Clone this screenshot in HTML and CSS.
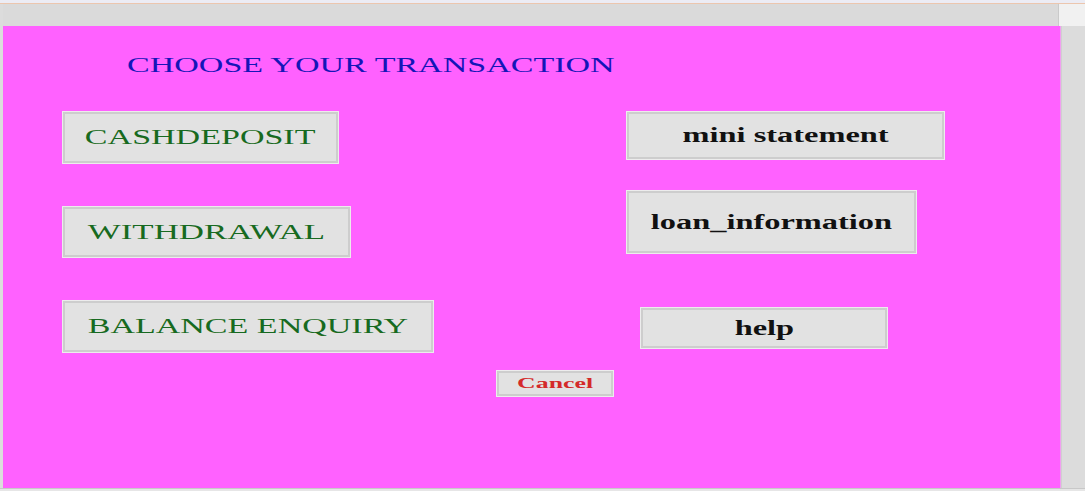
FILE: index.html
```html
<!DOCTYPE html>
<html>
<head>
<meta charset="utf-8">
<title>Transaction</title>
<link rel="stylesheet" href="styles.css">
</head>
<body>
<div class="topline"></div>
<div class="titlebar">
  <div class="titlebar-main"></div>
  <div class="titlebar-side"></div>
</div>
<div class="main">
  <div class="panel">
    <div class="heading"><span class="wide">CHOOSE YOUR TRANSACTION</span></div>
    <div class="cols">
      <div class="col col-left">
        <button class="btn green b-cash"><span class="wide">CASHDEPOSIT</span></button>
        <button class="btn green b-with"><span class="wide">WITHDRAWAL</span></button>
        <button class="btn green b-bal"><span class="wide">BALANCE ENQUIRY</span></button>
      </div>
      <div class="col col-right">
        <button class="btn dark b-mini"><span class="wide">mini statement</span></button>
        <button class="btn dark b-loan"><span class="wide">loan_information</span></button>
        <button class="btn dark b-help"><span class="wide">help</span></button>
      </div>
    </div>
    <button class="btn cancel"><span class="wide">Cancel</span></button>
  </div>
  <div class="gutter"></div>
</div>
<div class="bottom"></div>
</body>
</html>
```
FILE: styles.css
```css
html, body {
  margin: 0;
  padding: 0;
}
body {
  width: 1085px;
  height: 491px;
  overflow: hidden;
  background: #dcdcdc;
  font-family: "Liberation Serif", "Times New Roman", serif;
}
.topline {
  box-sizing: border-box;
  height: 4px;
  background: #ececf4;
  border-bottom: 1px solid #ecc6ae;
}
.titlebar {
  display: flex;
  height: 22px;
}
.titlebar-main {
  width: 1055px;
  margin-left: 3px;
  background: #dadada;
  border-right: 1px solid #cacaca;
}
.titlebar-side {
  flex: 1;
  background: #f1f1f1;
}
.main {
  display: flex;
  height: 462px;
}
.panel {
  width: 1058px;
  margin-left: 3px;
  background: #ff61ff;
  box-sizing: border-box;
  border-right: 1px solid #f0a0f0;
}
.gutter {
  flex: 1;
  background: #dcdcdc;
  border-left: 1px solid #d0d0d0;
}
.bottom {
  height: 3px;
  background: #e6e6e6;
  border-top: 1px solid #c8c8c8;
}
.wide {
  display: inline-block;
  transform: scaleX(1.62);
  transform-origin: center;
  white-space: nowrap;
}
.heading {
  margin-top: 27px;
  height: 24px;
  line-height: 24px;
  font-size: 21px;
  color: #1515b8;
  padding-left: 124px;
}
.heading .wide {
  transform-origin: left center;
}
.cols {
  display: flex;
  margin-top: 35px;
  padding-left: 60px;
}
.col {
  display: flex;
  flex-direction: column;
  align-items: flex-start;
}
.col-left {
  width: 564px;
}
.btn {
  display: flex;
  align-items: center;
  justify-content: center;
  box-sizing: border-box;
  padding: 0;
  background: #e2e2e2;
  border: 2px solid #cdcdcd;
  outline: 1px solid #ececec;
  font-family: "Liberation Serif", "Times New Roman", serif;
}
.green {
  color: #176a20;
  font-size: 21px;
}
.b-with .wide {
  transform: scaleX(1.66);
}
.dark {
  color: #111111;
  font-size: 20px;
  font-weight: bold;
}
.b-cash { width: 275px; height: 51px; }
.b-with { width: 287px; height: 50px; margin-top: 44px; }
.b-bal  { width: 370px; height: 51px; margin-top: 44px; }
.b-mini { width: 317px; height: 47px; }
.b-loan { width: 289px; height: 62px; margin-top: 32px; }
.b-help { width: 246px; height: 40px; margin-top: 55px; margin-left: 14px; }
.cancel {
  width: 116px;
  height: 25px;
  margin-top: 19px;
  margin-left: 494px;
  color: #d42a2a;
  font-size: 15px;
  font-weight: bold;
}
.cancel .wide {
  transform: scaleX(1.72);
}
```
